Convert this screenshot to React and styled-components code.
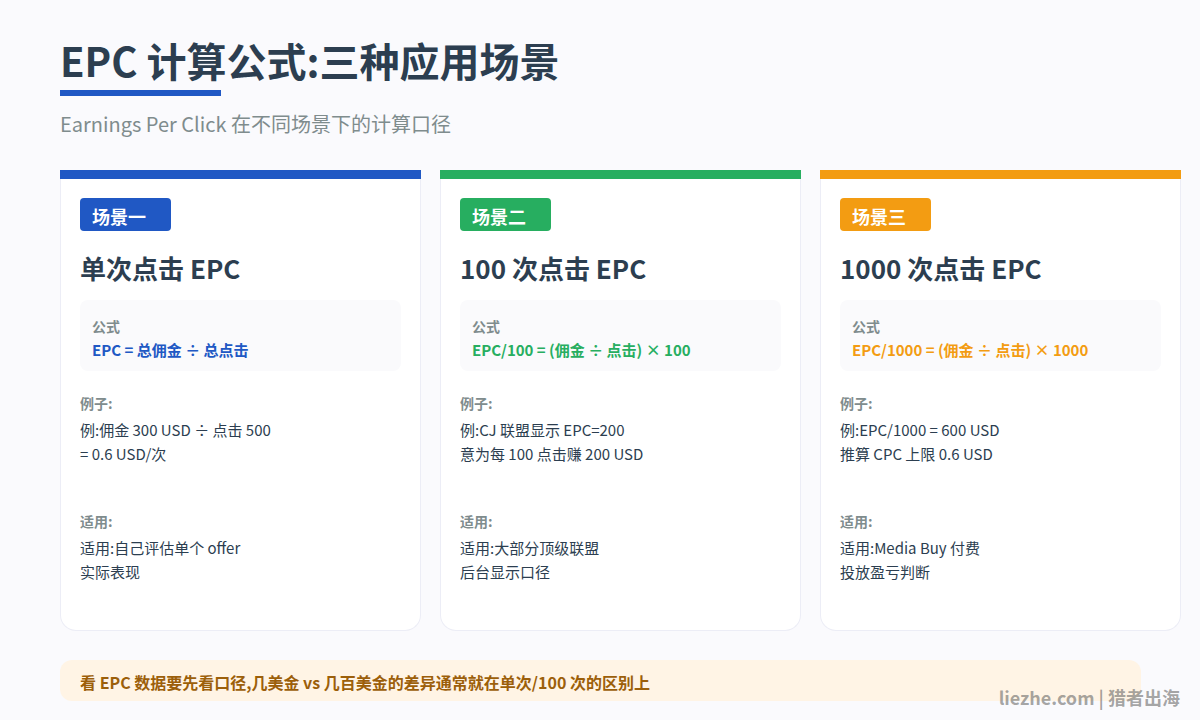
import React from "react";
import styled, { createGlobalStyle } from "styled-components";

const GlobalStyle = createGlobalStyle`
  html, body {
    margin: 0;
    padding: 0;
    background: #fafafd;
  }
  * {
    box-sizing: border-box;
  }
`;

const Page = styled.div`
  position: relative;
  width: 1200px;
  height: 720px;
  overflow: hidden;
  padding: 32px 0 0 60px;
  background: #fafafd;
  font-family: "Noto Sans CJK SC", "Noto Sans", sans-serif;
  color: #2c3e50;
`;
const Title = styled.h1`
  margin: 0 0 2px;
  font-size: 40px;
  line-height: 56px;
  font-weight: 700;
  color: #2c3e50;
`;
const TitleRule = styled.div`
  width: 161px;
  height: 6px;
  background: #2058c4;
`;
const Subtitle = styled.div`
  margin-top: 12px;
  font-size: 20px;
  line-height: 32px;
  color: #7f8c8d;
`;
const Cards = styled.div`
  display: flex;
  gap: 19px;
  margin-top: 30px;
`;
const Card = styled.div`
  width: 361px;
  height: 461px;
  display: flex;
  flex-direction: column;
  background: #ffffff;
  border: 1px solid #ecedf6;
  border-top: none;
  border-radius: 0 0 16px 16px;
`;
const TopBar = styled.div`
  height: 9px;
  margin: 0 -1px;
  background: ${(p) => p.$color};
`;
const CardBody = styled.div`
  display: flex;
  flex-direction: column;
  align-items: flex-start;
  padding: 19px 19px 0;
`;
const Badge = styled.div`
  width: 91px;
  height: 33px;
  padding-left: 12px;
  border-radius: 4px;
  background: ${(p) => p.$color};
  color: #ffffff;
  font-size: 18px;
  line-height: 37px;
  font-weight: 700;
`;
const CardTitle = styled.div`
  margin-top: 18px;
  font-size: 26px;
  line-height: 38px;
  font-weight: 700;
  color: #2c3e50;
`;
const FormulaBox = styled.div`
  width: 321px;
  height: 71px;
  margin-top: 13px;
  padding: 16px 12px 0;
  border-radius: 8px;
  background: #fafafc;
`;
const FormulaLabel = styled.div`
  margin-bottom: 2px;
  font-size: 14px;
  line-height: 20px;
  font-weight: 700;
  color: #7f8c8d;
`;
const FormulaText = styled.div`
  font-size: 15px;
  line-height: 24px;
  font-weight: 700;
  color: ${(p) => p.$color};
`;
const Section = styled.div`
  height: 118px;
  padding-top: 22px;
`;
const SectionLabel = styled.div`
  font-size: 14px;
  line-height: 20px;
  font-weight: 700;
  color: #7f8c8d;
`;
const SectionText = styled.div`
  margin-top: 5px;
  font-size: 15px;
  line-height: 24px;
  color: #2c3e50;
`;
const Notice = styled.div`
  width: 1081px;
  height: 41px;
  margin-top: 29px;
  padding-left: 20px;
  border-radius: 12px;
  background: #fff4e5;
  color: #9c5f0a;
  font-size: 16px;
  line-height: 45px;
  font-weight: 700;
`;
const Watermark = styled.div`
  position: absolute;
  right: 20px;
  bottom: 10px;
  font-size: 18px;
  line-height: 26px;
  font-weight: 700;
  color: rgba(90, 90, 90, 0.55);
`;

const scenes = [
  {
    color: "#2058c4",
    badge: "场景一",
    title: "单次点击 EPC",
    formula: "EPC = 总佣金 ÷ 总点击",
    example: ["例:佣金 300 USD ÷ 点击 500", "= 0.6 USD/次"],
    usage: ["适用:自己评估单个 offer", "实际表现"],
  },
  {
    color: "#27ae60",
    badge: "场景二",
    title: "100 次点击 EPC",
    formula: "EPC/100 = (佣金 ÷ 点击) × 100",
    example: ["例:CJ 联盟显示 EPC=200", "意为每 100 点击赚 200 USD"],
    usage: ["适用:大部分顶级联盟", "后台显示口径"],
  },
  {
    color: "#f39c12",
    badge: "场景三",
    title: "1000 次点击 EPC",
    formula: "EPC/1000 = (佣金 ÷ 点击) × 1000",
    example: ["例:EPC/1000 = 600 USD", "推算 CPC 上限 0.6 USD"],
    usage: ["适用:Media Buy 付费", "投放盈亏判断"],
  },
];

function Lines({ items }) {
  return (
    <SectionText>
      {items.map((line) => (
        <div key={line}>{line}</div>
      ))}
    </SectionText>
  );
}

export default function App() {
  return (
    <Page>
      <GlobalStyle />
      <Title>EPC 计算公式:三种应用场景</Title>
      <TitleRule />
      <Subtitle>Earnings Per Click 在不同场景下的计算口径</Subtitle>
      <Cards>
        {scenes.map((s) => (
          <Card key={s.badge}>
            <TopBar $color={s.color} />
            <CardBody>
              <Badge $color={s.color}>{s.badge}</Badge>
              <CardTitle>{s.title}</CardTitle>
              <FormulaBox>
                <FormulaLabel>公式</FormulaLabel>
                <FormulaText $color={s.color}>{s.formula}</FormulaText>
              </FormulaBox>
              <Section>
                <SectionLabel>例子:</SectionLabel>
                <Lines items={s.example} />
              </Section>
              <Section>
                <SectionLabel>适用:</SectionLabel>
                <Lines items={s.usage} />
              </Section>
            </CardBody>
          </Card>
        ))}
      </Cards>
      <Notice>看 EPC 数据要先看口径,几美金 vs 几百美金的差异通常就在单次/100 次的区别上</Notice>
      <Watermark>liezhe.com | 猎者出海</Watermark>
    </Page>
  );
}
